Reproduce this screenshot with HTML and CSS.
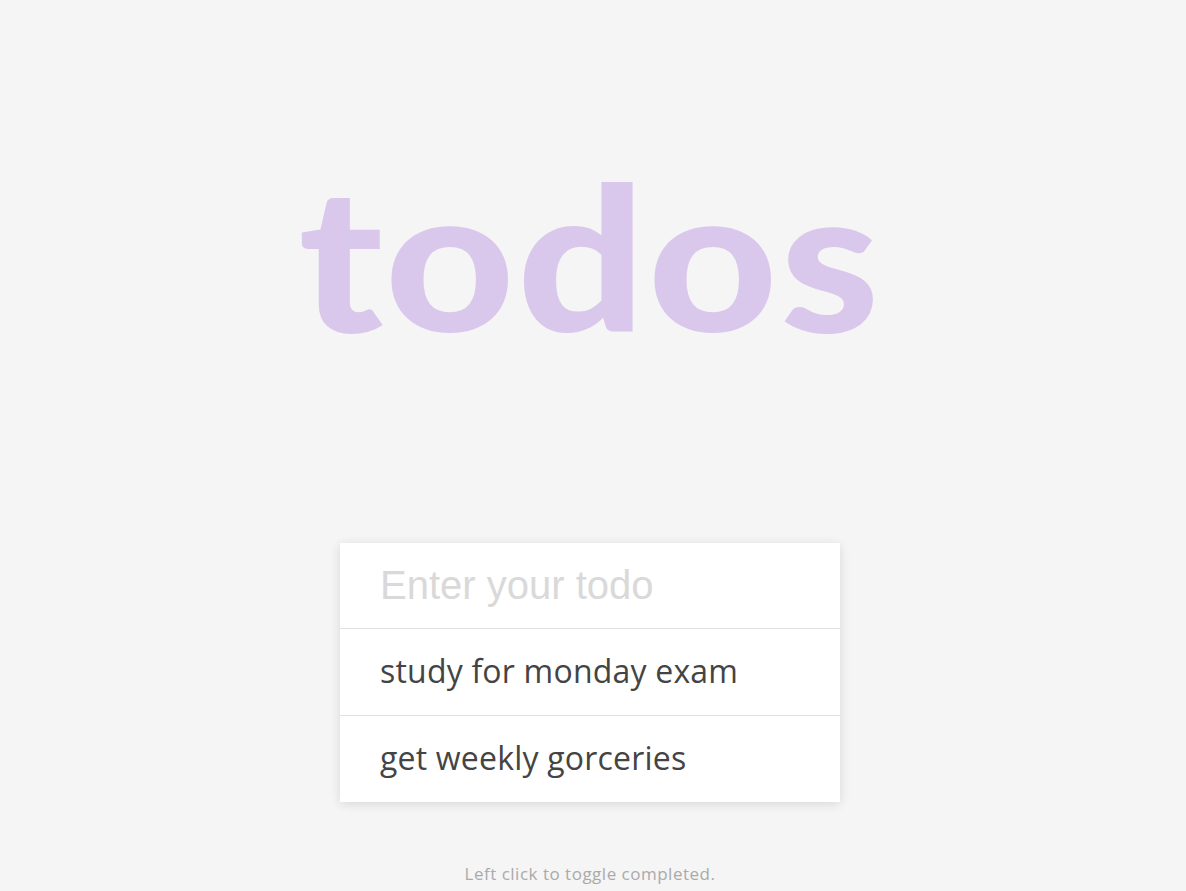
FILE: index.html
```html
<!DOCTYPE html>
<html lang="en">
<head>
<meta charset="utf-8">
<title>todos</title>
<link rel="stylesheet" href="styles.css">
</head>
<body>
<main class="app">
  <h1 class="title">todos</h1>
  <section class="card">
    <input class="new-todo" type="text" placeholder="Enter your todo">
    <ul class="list">
      <li class="item">study for monday exam</li>
      <li class="item">get weekly gorceries</li>
    </ul>
  </section>
  <p class="hint">Left click to toggle completed.</p>
</main>
</body>
</html>
```

FILE: styles.css
```css
html, body {
  margin: 0;
  padding: 0;
  background: #f5f5f5;
}
body {
  font-family: "Open Sans", "Noto Sans", sans-serif;
}
.app {
  display: flex;
  flex-direction: column;
  align-items: center;
  padding-right: 6px;
  height: 891px;
  box-sizing: border-box;
}
.title {
  margin: 0;
  margin-top: 140px;
  font-family: Lato, sans-serif;
  font-weight: 900;
  font-size: 200px;
  line-height: 230px;
  color: #dac8ec;
  letter-spacing: 2px;
  transform: scaleX(1.125);
}
.card {
  margin-top: 173px;
  width: 500px;
  background: #fff;
  box-shadow: 0 2px 10px rgba(0, 0, 0, 0.12);
}
.new-todo {
  display: block;
  width: 100%;
  box-sizing: border-box;
  height: 86px;
  border: none;
  border-bottom: 1px solid #e2e2e2;
  padding: 0 40px;
  font-family: "Liberation Sans", Arial, sans-serif;
  font-size: 40px;
  color: #444;
  background: #fff;
  outline: none;
}
.new-todo::placeholder {
  color: #d9d9d9;
}
.list {
  list-style: none;
  margin: 0;
  padding: 0;
}
.item {
  height: 83px;
  display: flex;
  align-items: center;
  padding: 0 40px 3px;
  font-size: 32px;
  letter-spacing: 0.2px;
  color: #444;
  border-bottom: 1px solid #e2e2e2;
}
.item:last-child {
  border-bottom: none;
}
.hint {
  margin: 60px 0 0;
  font-size: 17px;
  letter-spacing: 0.5px;
  color: #aaa;
}
```
